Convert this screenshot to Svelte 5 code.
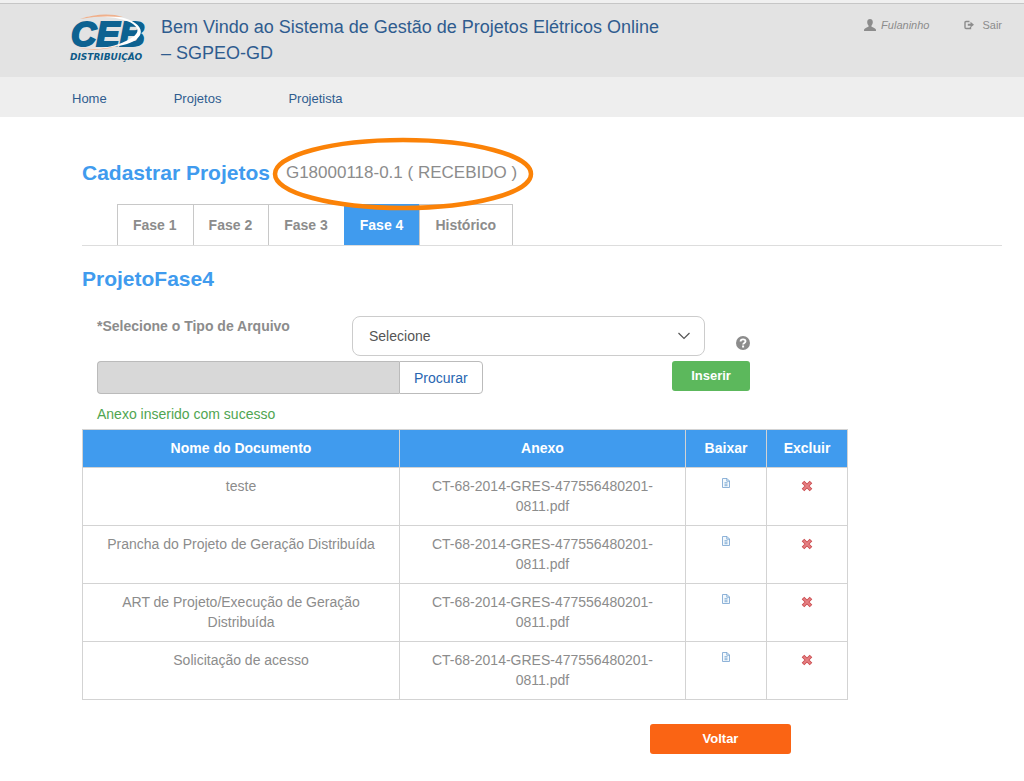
<script lang="ts">
	type Documento = { nome: string; anexo: string };

	const menu = ['Home', 'Projetos', 'Projetista'];
	const fases = ['Fase 1', 'Fase 2', 'Fase 3', 'Fase 4', 'Histórico'];

	let faseAtiva = $state('Fase 4');
	let tipoArquivo = $state('');
	let mensagem = $state('Anexo inserido com sucesso');

	let documentos: Documento[] = $state(
		[
			'teste',
			'Prancha do Projeto de Geração Distribuída',
			'ART de Projeto/Execução de Geração Distribuída',
			'Solicitação de acesso'
		].map((nome) => ({ nome, anexo: 'CT-68-2014-GRES-477556480201-0811.pdf' }))
	);

	const excluir = (index: number) => {
		documentos.splice(index, 1);
		mensagem = '';
	};
</script>

<header class="topo">
	<svg class="logo" viewBox="0 0 80 50" role="img" aria-label="CEB Distribuição">
		<text class="logo-ceb" x="2" y="32">CEB</text>
		<path
			d="M14 4C34-1 56 2 66 9c10 7 7 16-8 21-10 3-24 5-34 5 12-1 23-3 33-8 12-6 15-11 7-17C55 4 34 1 14 4Z"
			fill="#fff"
		/>
		<path d="M11 5C25 0 42-1 54 3 40 2 26 2 11 5Z" fill="#efb08c" />
		<path d="M10 34c14 2 30 1 43-4-13 6-29 7-43 4Z" fill="#efb08c" />
		<text class="logo-sub" x="1" y="46">DISTRIBUIÇÃO</text>
	</svg>
	<h1>Bem Vindo ao Sistema de Gestão de Projetos Elétricos Online – SGPEO-GD</h1>
	<div class="usuario">
		<a href="#perfil">
			<svg width="12" height="12" viewBox="0 0 12 12" aria-hidden="true">
				<path
					d="M6 0C4.300 0 3.200 1.200 3.200 3c0 1.500.5 2.700 1.300 3.500v1.300C3 8.700.3 9.200.1 10.600L0 12h12l-.1-1.400C11.700 9.200 9 8.700 7.500 7.800V6.500C8.300 5.700 8.800 4.500 8.800 3 8.800 1.200 7.700 0 6 0Z"
					fill="#8c8c8c"
				/>
			</svg>
			<em>Fulaninho</em>
		</a>
		<a href="#sair">
			<svg width="10" height="10" viewBox="0 0 10 10" aria-hidden="true">
				<path d="M5.500 1.500H2Q1 1.500 1 2.500v5Q1 8.500 2 8.500h4.500V7" fill="none" stroke="#8c8c8c" stroke-width="1.400" />
				<path d="M6.500 1.800 10 4.700 6.500 7.500V5.700H3.800V3.700h2.700Z" fill="#8c8c8c" />
			</svg>
			<span>Sair</span>
		</a>
	</div>
</header>

<nav class="menu">
	{#each menu as item}
		<a href="#{item.toLowerCase()}">{item}</a>
	{/each}
</nav>

<main>
	<div class="titulo">
		<h2>Cadastrar Projetos</h2>
		<span class="situacao">
			G18000118-0.1 ( RECEBIDO )
			<svg class="destaque" viewBox="0 0 262 76" aria-hidden="true">
				<ellipse cx="131" cy="38" rx="128" ry="34" fill="none" stroke="#fb8207" stroke-width="4.500" />
			</svg>
		</span>
	</div>

	<div class="abas" role="tablist">
		{#each fases as fase}
			<button
				type="button"
				role="tab"
				class:ativa={fase === faseAtiva}
				aria-selected={fase === faseAtiva}
				onclick={() => (faseAtiva = fase)}>{fase}</button
			>
		{/each}
	</div>

	<h2>ProjetoFase4</h2>

	<div class="conteudo">
		<form onsubmit={(e) => e.preventDefault()}>
			<div class="linha">
				<label for="tipo">*Selecione o Tipo de Arquivo</label>
				<div class="selecao">
					<select id="tipo" bind:value={tipoArquivo}>
						<option value="">Selecione</option>
						<option value="art">ART de Projeto/Execução</option>
						<option value="prancha">Prancha do Projeto</option>
					</select>
					<svg width="14" height="8" viewBox="0 0 14 8" aria-hidden="true">
						<path d="M1.500 1 7 6.500 12.500 1" fill="none" stroke="#555" stroke-width="1.200" />
					</svg>
				</div>
				<button type="button" class="ajuda" aria-label="Ajuda">
					<svg width="14" height="14" viewBox="0 0 14 14" aria-hidden="true">
						<circle cx="7" cy="7" r="7" fill="#8c8c8c" />
						<path
							d="M4.600 5.500C4.600 2.700 9.500 2.700 9.500 5.300 9.500 7 7.100 6.900 7.100 8.600"
							fill="none"
							stroke="#fff"
							stroke-width="1.900"
						/>
						<rect x="6.100" y="9.500" width="2" height="2" fill="#fff" />
					</svg>
				</button>
			</div>
			<div class="linha envio">
				<div class="arquivo">
					<input type="text" aria-label="Arquivo" readonly />
					<button type="button">Procurar</button>
				</div>
				<button type="submit" class="inserir">Inserir</button>
			</div>
			<p class="mensagem" role="status">{mensagem}</p>
		</form>

		<table>
			<thead>
				<tr>
					<th>Nome do Documento</th>
					<th class="col-anexo">Anexo</th>
					<th class="col-acao">Baixar</th>
					<th class="col-acao">Excluir</th>
				</tr>
			</thead>
			<tbody>
				{#each documentos as doc, i}
					<tr>
						<td>{doc.nome}</td>
						<td>{doc.anexo}</td>
						<td>
							<a class="icone" href="#baixar" aria-label="Baixar {doc.nome}">
								<svg width="8" height="10" viewBox="0 0 8 10" aria-hidden="true">
									<path d="M.5.5H5L7.500 3v6.500h-7Z" fill="#f4f9fd" stroke="#8fb3d8" />
									<path d="M4.800.5V3.200h2.700M2.500 4.700h3M2.500 6.200h3M2.500 7.700h3" fill="none" stroke="#6d9fce" stroke-width=".8" />
								</svg>
							</a>
						</td>
						<td>
							<button type="button" class="icone excluir" aria-label="Excluir {doc.nome}" onclick={() => excluir(i)}>
								<svg width="12" height="12" viewBox="0 0 12 12" aria-hidden="true">
									<path d="m2 2 8 8m0-8-8 8" stroke="#c9474b" stroke-width="3.600" />
									<path d="m2.500 2.500 7 7m0-7-7 7" stroke="#e58083" stroke-width="1.800" />
								</svg>
							</button>
						</td>
					</tr>
				{/each}
			</tbody>
		</table>

		<div class="rodape">
			<button type="button" class="voltar">Voltar</button>
		</div>
	</div>
</main>

<style>
	:global(body) {
		background: #fff;
		color: #8c8c8c;
		font: 14px/20px 'Liberation Sans', Arial, sans-serif;
	}
	button,
	input,
	select {
		box-sizing: border-box;
		margin: 0;
		font: inherit;
		cursor: pointer;
	}
	a {
		color: inherit;
		text-decoration: none;
	}
	h1,
	h2,
	p {
		margin: 0;
	}
	h2 {
		color: #409bee;
		font-size: 21px;
		line-height: 28px;
	}

	/* topo */
	.topo {
		display: flex;
		align-items: flex-start;
		box-sizing: border-box;
		min-height: 77px;
		padding: 11px 22px 8px 69px;
		background: #e3e3e3;
		border-top: 3px solid #f0f0f0;
		box-shadow: inset 0 1px #c6c6c6;
	}
	.logo {
		flex: none;
		width: 80px;
		height: 50px;
	}
	.logo-ceb {
		fill: #0d6291;
		stroke: #0d6291;
		stroke-width: 2;
		font-size: 35px;
		font-weight: bold;
		font-style: italic;
	}
	.logo-sub {
		fill: #0d5a88;
		font: italic bold 9px 'DejaVu Sans', Verdana, sans-serif;
	}
	h1 {
		max-width: 510px;
		margin-left: 12px;
		color: #2f5c8f;
		font-size: 18px;
		font-weight: normal;
		line-height: 26px;
	}
	.usuario {
		display: flex;
		gap: 35px;
		margin-left: auto;
		font-size: 11px;
	}
	.usuario a {
		display: flex;
		align-items: center;
		gap: 5px;
		height: 22px;
	}
	.usuario a + a {
		gap: 8px;
	}
	.menu {
		display: flex;
		gap: 67px;
		padding: 12px 72px 8px;
		background: #eee;
		color: #2f5c8f;
		font-size: 13px;
	}

	/* abas */
	main {
		padding: 42px 22px 27px 82px;
	}
	.titulo {
		display: flex;
		align-items: center;
		gap: 16px;
	}
	.situacao {
		position: relative;
		font-size: 17px;
		line-height: 24px;
	}
	.destaque {
		position: absolute;
		top: -25px;
		left: -14px;
		width: 262px;
		height: 76px;
		pointer-events: none;
	}
	.abas {
		display: flex;
		margin: 17px 0 19px;
		padding-left: 35px;
		border-bottom: 1px solid #ddd;
	}
	.abas button {
		height: 41px;
		padding: 0 16px 0 15px;
		background: #fff;
		border: 1px solid #c8c8c8;
		border-width: 1px 0 0 1px;
		color: #8c8c8c;
		font-weight: bold;
	}
	.abas button:last-child {
		border-right-width: 1px;
	}
	.abas .ativa {
		background: #409bee;
		border-color: #409bee;
		color: #fff;
	}

	/* formulário */
	.conteudo {
		max-width: 766px;
		margin-top: 23px;
	}
	form {
		max-width: 653px;
		padding: 0 15px;
	}
	.linha {
		display: flex;
		justify-content: space-between;
		margin-bottom: 5px;
	}
	label {
		width: 255px;
		font-weight: bold;
	}
	.selecao {
		display: flex;
		flex: 1;
		align-items: center;
		margin-right: 31px;
	}
	select {
		width: 100%;
		height: 40px;
		padding: 0 16px;
		appearance: none;
		background: #fff;
		border: 1px solid #ccc;
		border-radius: 8px;
		color: #555;
	}
	.selecao svg {
		margin-left: -28px;
		margin-right: 14px;
		pointer-events: none;
	}
	.ajuda {
		align-self: flex-end;
		display: flex;
		margin-bottom: 6px;
		padding: 0;
		background: none;
		border: 0;
	}
	.envio {
		align-items: flex-start;
		margin-bottom: 10px;
	}
	.arquivo {
		display: flex;
	}
	.arquivo input {
		width: 302px;
		height: 33px;
		background: #d8d8d8;
		border: 1px solid #bbb;
		border-right: 0;
		border-radius: 4px 0 0 4px;
	}
	.arquivo button {
		padding: 0 14px;
		background: #fff;
		border: 1px solid #bbb;
		border-radius: 0 4px 4px 0;
		color: #2866b1;
	}
	.inserir,
	.voltar {
		height: 30px;
		border: 0;
		border-radius: 3px;
		color: #fff;
		font-size: 13px;
		font-weight: bold;
	}
	.inserir {
		width: 78px;
		background: #5cb85c;
	}
	.mensagem {
		min-height: 20px;
		margin-bottom: 5px;
		color: #4fa551;
	}

	/* anexos */
	table {
		width: 100%;
		table-layout: fixed;
		border-collapse: collapse;
		text-align: center;
	}
	th,
	td {
		padding: 8px 20px 9px;
		border: 1px solid #d3d3d3;
		vertical-align: top;
	}
	th {
		padding: 8px 0 9px;
		background: #409bee;
		color: #fff;
	}
	.col-anexo {
		width: 285px;
	}
	.col-acao {
		width: 80px;
	}
	.icone {
		display: flex;
		justify-content: center;
		padding: 2px 0;
	}
	.excluir {
		width: 100%;
		padding: 4px 0;
		background: none;
		border: 0;
	}
	.rodape {
		display: flex;
		justify-content: flex-end;
		padding: 24px 57px 0 0;
	}
	.voltar {
		width: 141px;
		background: #fa6414;
	}
</style>
